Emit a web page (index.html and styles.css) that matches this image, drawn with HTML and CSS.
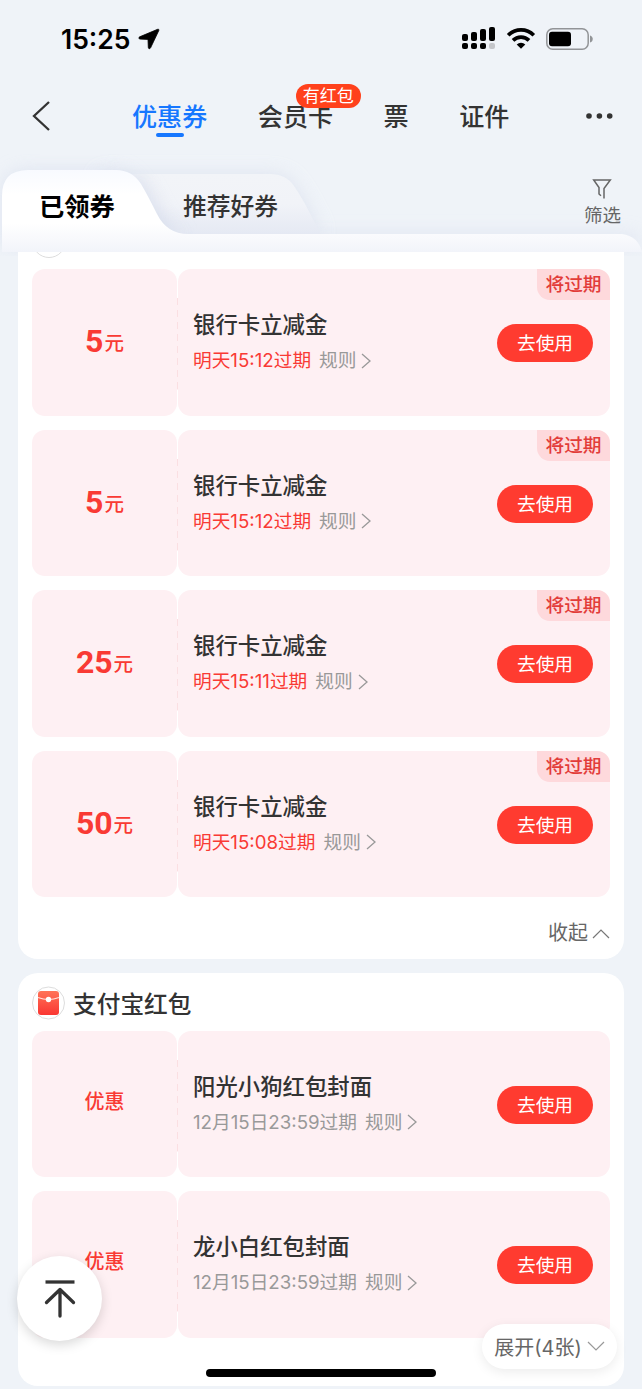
FILE: index.html
```html
<!DOCTYPE html>
<html lang="zh-CN">
<head>
<meta charset="utf-8">
<title>优惠券</title>
<link rel="stylesheet" href="styles.css">
</head>
<body>
<div class="status">
    <span class="time">15:25</span>
    <svg class="locate" width="22" height="22" viewBox="0 0 22 22"><path d="M19.600 1.300 1.700 8.800c-1.300.6-1.100 2.200.4 2.300l7.900.3.300 8c.1 1.500 1.700 1.700 2.300.4L20.800 2.500c.4-.9-.3-1.600-1.200-1.200z" stroke="#000" stroke-width=".8"/></svg>
    <svg class="signal" width="34" height="24" viewBox="0 0 34 24">
        <rect x="0" y="7" width="6" height="7" rx="2"/><rect x="9" y="5" width="6" height="9" rx="2"/><rect x="18" y="2" width="6" height="12" rx="2"/><rect x="27" y="0" width="6" height="14" rx="2"/>
        <rect x="0" y="16" width="6" height="6" rx="2"/><rect x="9" y="16" width="6" height="6" rx="2"/><rect x="18" y="16" width="6" height="6" rx="2"/><rect x="27" y="16" width="6" height="6" rx="2" fill="#c4c6ca"/>
    </svg>
    <svg class="wifi" width="30" height="22" viewBox="0 0 30 22" fill="none" stroke="#000" stroke-width="3.700">
        <path d="M2.200 7.200a18.200 18.200 0 0 1 25.600 0"/><path d="M7 12.400a11.400 11.400 0 0 1 16 0"/>
        <path d="M15 20.800l-4.300-4.400a6.200 6.200 0 0 1 8.600 0z" fill="#000" stroke="none"/>
    </svg>
    <svg class="battery" width="48" height="22" viewBox="0 0 48 22">
        <rect x=".8" y=".8" width="41.400" height="20.400" rx="6" fill="none" stroke="#929497" stroke-width="1.500"/>
        <rect x="3" y="3.700" width="22" height="14.600" rx="3"/>
        <path d="M44 7.500c3.700 1 3.700 6 0 7z" fill="#929497"/>
    </svg>
</div>

<div class="nav">
    <svg class="back" width="20" height="32" viewBox="0 0 20 32"><path d="M18 2 3 16l15 14" fill="none" stroke="#333" stroke-width="2.300"/></svg>
    <span class="nav-item active">优惠券</span>
    <span class="nav-item">会员卡<em class="tip">有红包</em></span>
    <span class="nav-item">票</span>
    <span class="nav-item">证件</span>
    <svg class="more" width="27" height="6" viewBox="0 0 27 6" fill="#333"><circle cx="3" cy="3" r="2.800"/><circle cx="13.400" cy="3" r="2.800"/><circle cx="23.700" cy="3" r="2.800"/></svg>
</div>

<div class="tabs">
    <svg class="tabs-bg" width="642" height="102" viewBox="0 0 642 102">
        <defs>
            <linearGradient id="front" x1="0" y1="0" x2="0" y2="1"><stop offset="0" stop-color="#f8faff"/><stop offset=".3" stop-color="#fff"/><stop offset=".65" stop-color="#fff"/><stop offset="1" stop-color="#f2f4fa"/></linearGradient>
            <linearGradient id="rear" x1="0" y1="0" x2="0" y2="1"><stop offset="0" stop-color="#f2f4f8"/><stop offset=".5" stop-color="#f1f3f8"/><stop offset="1" stop-color="#e5e9f3"/></linearGradient>
            <filter id="soft" x="-10%" y="-40%" width="120%" height="180%"><feGaussianBlur stdDeviation="9"/></filter>
            <clipPath id="rear-clip"><path d="M100 20H270Q286 20 294 32C304 46 312 64 321 80H100z"/></clipPath>
        </defs>
        <path d="M2 92V42Q2 16 28 16H112Q128 16 138 31L160 66Q170 80 188 80H624Q642 80 642 92z" fill="#d9dfee" filter="url(#soft)" opacity=".75"/>
        <path d="M100 20H270Q286 20 294 32C304 46 312 64 321 80H100z" fill="#d5dbeb" filter="url(#soft)" opacity=".65"/>
        <path d="M100 20H270Q286 20 294 32C304 46 312 64 321 80H100z" fill="url(#rear)"/>
        <g clip-path="url(#rear-clip)">
            <path d="M120 16Q138 18 147 34Q153 46 163 64Q173 80 190 82H150z" fill="#d2d9ea" filter="url(#soft)" opacity=".8"/>
        </g>
        <path d="M2 98V42Q2 16 28 16H116Q132 16 141 30Q147 40 157 60Q167 80 188 80H622Q638 82 642 98z" fill="url(#front)"/>
    </svg>
    <span class="tab on">已领券</span>
    <span class="tab">推荐好券</span>
    <div class="filter">
        <svg width="20" height="22" viewBox="0 0 20 22" fill="none" stroke="#666" stroke-width="1.500"><path d="M12 20.500V10.500L18.300 2H1.700L7 9.500V16l2 1.800"/></svg>
        <span>筛选</span>
    </div>
</div>

<div class="panel first">
    <div class="peek"></div>
    <div class="coupon">
        <div class="amount"><b>5</b>元</div>
        <div class="detail">
            <div class="info">
                <div class="name">银行卡立减金</div>
                <div class="meta"><span class="soon">明天15:12过期</span><span class="rule">规则</span><svg class="arrow" width="10" height="16" viewBox="0 0 10 16"><path d="M1 1l8 7-8 7"/></svg></div>
            </div>
            <span class="use">去使用</span>
            <span class="tag">将过期</span>
        </div>
    </div>
    <div class="coupon">
        <div class="amount"><b>5</b>元</div>
        <div class="detail">
            <div class="info">
                <div class="name">银行卡立减金</div>
                <div class="meta"><span class="soon">明天15:12过期</span><span class="rule">规则</span><svg class="arrow" width="10" height="16" viewBox="0 0 10 16"><path d="M1 1l8 7-8 7"/></svg></div>
            </div>
            <span class="use">去使用</span>
            <span class="tag">将过期</span>
        </div>
    </div>
    <div class="coupon">
        <div class="amount"><b>25</b>元</div>
        <div class="detail">
            <div class="info">
                <div class="name">银行卡立减金</div>
                <div class="meta"><span class="soon">明天15:11过期</span><span class="rule">规则</span><svg class="arrow" width="10" height="16" viewBox="0 0 10 16"><path d="M1 1l8 7-8 7"/></svg></div>
            </div>
            <span class="use">去使用</span>
            <span class="tag">将过期</span>
        </div>
    </div>
    <div class="coupon">
        <div class="amount"><b>50</b>元</div>
        <div class="detail">
            <div class="info">
                <div class="name">银行卡立减金</div>
                <div class="meta"><span class="soon">明天15:08过期</span><span class="rule">规则</span><svg class="arrow" width="10" height="16" viewBox="0 0 10 16"><path d="M1 1l8 7-8 7"/></svg></div>
            </div>
            <span class="use">去使用</span>
            <span class="tag">将过期</span>
        </div>
    </div>
    <div class="fold">收起<svg width="18" height="11" viewBox="0 0 18 11"><path d="M1 10l8-8 8 8" fill="none" stroke="#777" stroke-width="1.200"/></svg></div>
</div>

<div class="panel second">
    <div class="title">
        <svg width="34" height="34" viewBox="0 0 34 34">
            <defs><linearGradient id="red" x1="0" y1="0" x2="0" y2="1"><stop offset="0" stop-color="#ff7358"/><stop offset="1" stop-color="#fa3632"/></linearGradient></defs>
            <circle cx="16.500" cy="17" r="16" fill="#fff" stroke="#ddd"/>
            <rect x="6" y="5" width="21" height="24" rx="3" fill="url(#red)"/>
            <path d="M6 11.500q10.500 4 21 0" fill="none" stroke="#ffe3dc" stroke-width="1.200"/>
            <circle cx="16.500" cy="13.500" r="2.700" fill="#fff"/>
        </svg>
        支付宝红包
    </div>
    <div class="coupon">
        <div class="amount text">优惠</div>
        <div class="detail">
            <div class="info">
                <div class="name">阳光小狗红包封面</div>
                <div class="meta"><span class="date">12月15日23:59过期</span><span class="rule">规则</span><svg class="arrow" width="10" height="16" viewBox="0 0 10 16"><path d="M1 1l8 7-8 7"/></svg></div>
            </div>
            <span class="use">去使用</span>
        </div>
    </div>
    <div class="coupon">
        <div class="amount text">优惠</div>
        <div class="detail">
            <div class="info">
                <div class="name">龙小白红包封面</div>
                <div class="meta"><span class="date">12月15日23:59过期</span><span class="rule">规则</span><svg class="arrow" width="10" height="16" viewBox="0 0 10 16"><path d="M1 1l8 7-8 7"/></svg></div>
            </div>
            <span class="use">去使用</span>
        </div>
    </div>
</div>

<!-- floating things -->
<div class="to-top"><svg width="32" height="40" viewBox="0 0 32 40" fill="none" stroke="#333" stroke-width="3.300" stroke-linecap="round" stroke-linejoin="round"><path d="M1.500 3h29" stroke-linecap="butt"/><path d="M16 37V11M2.500 23.500l13.500-13 13.500 13"/></svg></div>
<div class="expand">展开(4张)<svg width="18" height="11" viewBox="0 0 18 11"><path d="M1 1l8 8 8-8" fill="none" stroke="#999" stroke-width="1.200"/></svg></div>
<div class="home-bar"></div>
</body>
</html>
```
FILE: styles.css
```css
* {
    box-sizing: border-box;
}
body {
    position: relative;
    margin: 0;
    width: 642px;
    height: 1389px;
    overflow: hidden;
    background: #eff3f8;
    color: #333;
    font-family: Inter, "Noto Sans CJK SC", sans-serif;
}
svg {
    display: block;
    flex: none;
}

.status {
    display: flex;
    align-items: center;
    height: 77px;
    padding: 0 48px 0 61px;
    color: #000;
}
.time {
    width: 77px;
    font-size: 26.500px;
    font-weight: 600;
    white-space: nowrap;
}
.signal {
    margin-left: auto;
}
.wifi {
    margin: 0 10px 0 10px;
}

.nav {
    display: flex;
    align-items: center;
    height: 78px;
    padding-left: 31px;
}
.nav-item {
    position: relative;
    margin-right: 50.500px;
    padding-top: 1px;
    font-size: 25.100px;
    font-weight: 500;
    line-height: 36px;
    white-space: nowrap;
}
.back {
    margin-right: 81px;
}
.active {
    color: #1677ff;
}
.active::after {
    content: "";
    position: absolute;
    left: 24px;
    bottom: -2px;
    width: 28px;
    height: 4px;
    border-radius: 2px;
    background: #1677ff;
}
.tip {
    position: absolute;
    left: 38px;
    top: -14px;
    width: 65px;
    height: 24px;
    border-radius: 12px;
    background: #ff411c;
    color: #fff;
    font-size: 17px;
    font-style: normal;
    font-weight: 400;
    line-height: 24px;
    text-align: center;
}
.more {
    margin: 0 0 0 26px;
}

.tabs {
    position: relative;
    display: flex;
    height: 97px;
    padding: 0 21px 0 39px;
}
.tabs-bg {
    position: absolute;
    left: 0;
    top: -1px;
    z-index: -1;
}
.tab {
    margin-right: 68px;
    padding-top: 34px;
    font-size: 23.800px;
    font-weight: 500;
    line-height: 36px;
}
.on {
    color: #000;
    font-size: 25.300px;
    font-weight: 700;
}
.filter {
    display: flex;
    flex-direction: column;
    align-items: center;
    margin-left: auto;
    padding-top: 23px;
    color: #666;
    font-size: 18.500px;
    line-height: 30px;
}

.panel {
    width: 606px;
    margin-left: 18px;
    padding: 0 14px;
    background: #fff;
}
.first {
    position: relative;
    height: 706.500px;
    padding-top: 17px;
    border-radius: 0 0 20px 20px;
}
/* bottom edge of the scrolled-away section icon */
.peek {
    position: absolute;
    left: 14px;
    top: 0;
    width: 32px;
    height: 6px;
    overflow: hidden;
}
.peek::after {
    content: "";
    position: absolute;
    bottom: 0;
    width: 32px;
    height: 32px;
    border: 1px solid #ddd;
    border-radius: 50%;
}
.second {
    height: 413px;
    margin-top: 14px;
    border-radius: 20px;
}

.coupon {
    display: flex;
    gap: 1px;
    height: 146.500px;
    margin-bottom: 14px;
}
.amount {
    display: flex;
    align-items: flex-start;
    justify-content: center;
    width: 145px;
    padding-top: 51px;
    border-radius: 13px;
    background: #fef0f3;
    color: #f93a34;
    font-size: 19.500px;
    font-weight: 500;
    line-height: 46px;
}
.amount b {
    margin-right: 1px;
    font-family: Roboto, sans-serif;
    font-size: 32px;
    line-height: 42px;
}
.text {
    padding-top: 48px;
    font-size: 20px;
}
.detail {
    position: relative;
    display: flex;
    align-items: flex-start;
    justify-content: space-between;
    flex: 1;
    padding: 0 17px 0 15px;
    border-radius: 13px;
    background: #fef0f3;
}
.detail::before {
    content: "";
    position: absolute;
    left: -1px;
    top: 29px;
    width: 1px;
    height: 92px;
    background: repeating-linear-gradient(#fbdfe2 0 7px, #fef0f3 7px 12px);
}
.info {
    padding-top: 39px;
}
.name {
    font-size: 22.400px;
    font-weight: 500;
    line-height: 34px;
}
.meta {
    display: flex;
    align-items: center;
    color: #999;
    font-size: 18.700px;
    line-height: 37px;
}
.soon {
    color: #f93a34;
}
.rule {
    margin: 0 5px 0 8px;
}
.arrow path {
    fill: none;
    stroke: #999;
    stroke-width: 1.300;
}
.use {
    width: 96px;
    height: 38px;
    margin-top: 55px;
    border-radius: 19px;
    background: #ff3b30;
    color: #fff;
    font-size: 18.700px;
    line-height: 39px;
    text-align: center;
}
.tag {
    position: absolute;
    right: 0;
    top: 0;
    width: 73px;
    height: 31px;
    border-radius: 0 13px 0 13px;
    background: #fed9dc;
    color: #e23c39;
    font-size: 18.700px;
    font-weight: 500;
    line-height: 32px;
    text-align: center;
}
.fold {
    display: flex;
    align-items: center;
    justify-content: flex-end;
    gap: 4px;
    margin-top: 21px;
    color: #666;
    font-size: 20px;
    line-height: 30px;
}
.title {
    display: flex;
    align-items: center;
    gap: 7px;
    height: 58px;
    padding-top: 2px;
    font-size: 23.700px;
    font-weight: 500;
}

.to-top {
    position: absolute;
    left: 17px;
    top: 1256px;
    display: flex;
    align-items: center;
    justify-content: center;
    width: 85px;
    height: 85px;
    border-radius: 50%;
    background: #fff;
    box-shadow: 0 4px 12px rgba(0, 0, 0, .15);
}
.expand {
    position: absolute;
    left: 482px;
    top: 1324px;
    display: flex;
    align-items: center;
    justify-content: center;
    gap: 5px;
    width: 135px;
    height: 45px;
    border-radius: 23px;
    background: #fff;
    box-shadow: 0 3px 12px rgba(0, 0, 0, .08);
    color: #666;
    font-size: 20px;
    white-space: nowrap;
}
.home-bar {
    position: absolute;
    left: 206px;
    top: 1369px;
    width: 230px;
    height: 8px;
    border-radius: 4px;
    background: #000;
}
```
